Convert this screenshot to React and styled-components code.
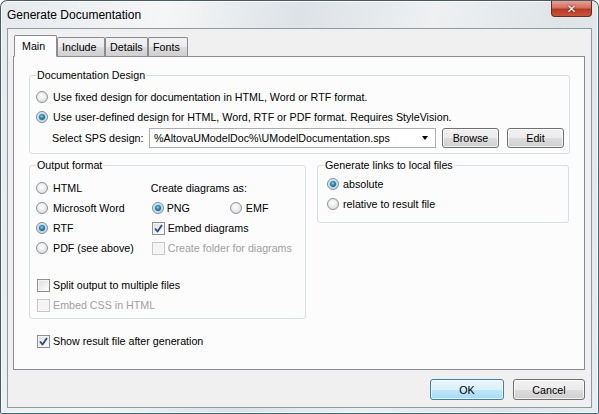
import React from 'react';
import styled, { createGlobalStyle, css } from 'styled-components';

const GlobalStyle = createGlobalStyle`
  html, body {
    margin: 0;
    padding: 0;
    background: #ffffff;
  }
  body {
    font-family: "Liberation Sans", Arial, sans-serif;
    font-size: 10.7px;
    color: #000;
  }
`;

// Window frame
const Window = styled.div`
  width: 599px;
  height: 414px;
  box-sizing: border-box;
  border: 1px solid #4a5a66;
  border-bottom-color: #2d6f82;
  border-right-color: #3c6f80;
  border-radius: 7px 7px 2px 2px;
  background: linear-gradient(100deg, #e6eaed 0%, #f5f6f7 25%, #dde2e6 45%, #eef0f2 65%, #dfe4e7 85%, #e9ecee 100%);
  box-shadow: inset 0 0 0 1px rgba(255, 255, 255, 0.7);
  display: flex;
  flex-direction: column;
  overflow: hidden;
`;

const TitleBar = styled.div`
  height: 27px;
  display: flex;
  justify-content: space-between;
  align-items: flex-start;
  padding: 0 6px 0 6px;
  flex-shrink: 0;
`;

const Title = styled.div`
  font-size: 12px;
  line-height: 12px;
  margin-top: 8px;
  color: #000;
`;

const CloseButton = styled.div`
  width: 41px;
  height: 16px;
  box-sizing: border-box;
  border: 1px solid #6d2a22;
  border-top: none;
  border-radius: 0 0 4px 4px;
  background: linear-gradient(#e8a093 0%, #d4705f 45%, #b73b24 55%, #c9553c 100%);
  display: flex;
  align-items: center;
  justify-content: center;
  color: #fff;
  font-family: "DejaVu Sans", sans-serif;
  font-weight: bold;
  font-size: 12px;
  text-shadow: 0 0 2px #5a1a10, 0 0 1px #5a1a10;
`;

const Client = styled.div`
  flex: 1;
  margin: 0 6px 7px 6px;
  border: 1px solid #8c9aa6;
  background: #f0f0f0;
  display: flex;
  flex-direction: column;
  padding: 5px 6px 7px 5px;
`;

// Tabs
const TabStrip = styled.div`
  display: flex;
  align-items: flex-end;
  height: 22px;
  padding-left: 1px;
  position: relative;
  z-index: 1;
`;

const Tab = styled.div`
  box-sizing: border-box;
  height: ${p => (p.$active ? '22px' : '19px')};
  padding: ${p => (p.$active ? '3px 0 0 7px' : '2px 0 0 4px')};
  width: ${p => p.$w}px;
  border: 1px solid #898c95;
  border-bottom: ${p => (p.$active ? '1px solid #fcfcfc' : 'none')};
  border-radius: 2px 2px 0 0;
  margin-bottom: ${p => (p.$active ? '-1px' : '0')};
  background: ${p =>
    p.$active ? '#fcfcfc' : 'linear-gradient(#f2f2f2 0%, #ebebeb 50%, #dddddd 51%, #cfcfcf 100%)'};
  line-height: 14px;
`;

const Panel = styled.div`
  box-sizing: border-box;
  height: 314px;
  border: 1px solid #898c95;
  background: #fcfcfc;
  padding: 12px 14px 0 15px;
  display: flex;
  flex-direction: column;
`;

// Group boxes
const Group = styled.fieldset`
  margin: 0;
  padding: 0 ${p => p.$pr ?? 6}px ${p => p.$pb || 0}px 6px;
  border: 1px solid #d5dfe5;
  border-radius: 3px;
  box-sizing: border-box;
  width: ${p => (p.$w ? `${p.$w}px` : 'auto')};
  min-width: 0;
`;

const Legend = styled.legend`
  padding: 0 1px;
  line-height: 13px;
`;

const GroupRow = styled.div`
  display: flex;
  gap: 11px;
  margin-top: 5px;
  align-items: flex-start;
`;

const Columns = styled.div`
  display: flex;
`;

const Column = styled.div`
  width: ${p => p.$w}px;
  display: flex;
  flex-direction: column;
`;

const Row = styled.div`
  display: flex;
  align-items: center;
  height: ${p => p.$h || 20}px;
  gap: ${p => p.$gap ?? 5}px;
  margin-top: ${p => p.$mt || 0}px;
  margin-left: ${p => p.$ml || 0}px;
  color: ${p => (p.$disabled ? '#a0a0a0' : '#000')};
  white-space: nowrap;
  & > * {
    flex-shrink: 0;
  }
`;

const Spacer = styled.div`
  width: ${p => p.$w}px;
`;

const FieldLabel = styled.span`
  width: ${p => p.$w}px;
`;

// Radio button
const RadioCircle = styled.span`
  width: 12px;
  height: 12px;
  box-sizing: border-box;
  border-radius: 50%;
  border: 1px solid #8b9297;
  background: radial-gradient(circle at 45% 40%, #ffffff 0%, #eeeff0 40%, #cfd2d5 100%);
  position: relative;
  flex-shrink: 0;
  ${p =>
    p.$checked &&
    css`
      border-color: #6f8fa8;
      &::after {
        content: '';
        position: absolute;
        left: 2px;
        top: 2px;
        width: 6px;
        height: 6px;
        border-radius: 50%;
        background: radial-gradient(circle at 45% 40%, #7fd5f2 0%, #2a7fa9 45%, #0e3d5c 100%);
        box-shadow: 0 0 1px 1px rgba(70, 150, 200, 0.35);
      }
    `}
`;

// Checkbox
const CheckBox = styled.span`
  width: 13px;
  height: 13px;
  box-sizing: border-box;
  border: 1px solid ${p => (p.$disabled ? '#c6c6c6' : '#8e8f8f')};
  background: ${p =>
    p.$disabled ? '#f4f4f4' : 'linear-gradient(135deg, #dcdcdc 0%, #f2f2f2 60%, #ffffff 100%)'};
  box-shadow: inset 0 0 0 1px ${p => (p.$disabled ? '#f7f7f7' : '#f4f4f4')};
  display: flex;
  align-items: center;
  justify-content: center;
  flex-shrink: 0;
`;

const CheckMark = () => (
  <svg width="9" height="9" viewBox="0 0 9 9">
    <path d="M1 4.5 L3.5 7.5 L8 1" fill="none" stroke="#2b4d8c" strokeWidth="1.9" strokeLinejoin="round" />
  </svg>
);

const Radio = ({ checked, children }) => (
  <Row>
    <RadioCircle $checked={checked} />
    <span>{children}</span>
  </Row>
);

const Check = ({ checked, disabled, children, ...rest }) => (
  <Row $gap={3} $disabled={disabled} {...rest}>
    <CheckBox $disabled={disabled}>{checked && <CheckMark />}</CheckBox>
    <span>{children}</span>
  </Row>
);

// Combo & buttons
const Combo = styled.div`
  box-sizing: border-box;
  width: 287px;
  height: 20px;
  border: 1px solid #abadb3;
  background: #fff;
  display: flex;
  align-items: center;
  justify-content: space-between;
  padding: 0 7px 0 4px;
`;

const Arrow = styled.span`
  width: 0;
  height: 0;
  border-left: 3.5px solid transparent;
  border-right: 3.5px solid transparent;
  border-top: 4px solid #000;
`;

const Button = styled.div`
  box-sizing: border-box;
  width: ${p => p.$w}px;
  height: ${p => p.$h || 20}px;
  border: 1px solid ${p => (p.$default ? '#3c7fb1' : '#707070')};
  border-radius: 3px;
  background: ${p =>
    p.$default
      ? 'linear-gradient(#eaf6fd 0%, #d9f0fc 50%, #bee6fd 51%, #a7d9f5 100%)'
      : 'linear-gradient(#f2f2f2 0%, #ebebeb 50%, #dddddd 51%, #cfcfcf 100%)'};
  box-shadow: inset 0 0 0 1px rgba(255, 255, 255, 0.7);
  display: flex;
  align-items: center;
  justify-content: center;
  margin-left: ${p => p.$ml || 0}px;
`;

const Footer = styled.div`
  display: flex;
  justify-content: flex-end;
  gap: 9px;
  margin-top: 9px;
`;

export default function App() {
  return (
    <>
      <GlobalStyle />
      <Window>
        <TitleBar>
          <Title>Generate Documentation</Title>
          <CloseButton>✕</CloseButton>
        </TitleBar>
        <Client>
          <TabStrip>
            <Tab $active $w={43}>Main</Tab>
            <Tab $w={48}>Include</Tab>
            <Tab $w={43}>Details</Tab>
            <Tab $w={40}>Fonts</Tab>
          </TabStrip>
          <Panel>
            <Group $pb={5} $pr={3}>
              <Legend>Documentation Design</Legend>
              <Row $h={5} />
              <Radio>Use fixed design for documentation in HTML, Word or RTF format.</Radio>
              <Radio checked>Use user-defined design for HTML, Word, RTF or PDF format. Requires StyleVision.</Radio>
              <Row $h={21} $gap={0}>
                <Spacer $w={16} />
                <FieldLabel $w={97}>Select SPS design:</FieldLabel>
                <Combo>
                  <span>%AltovaUModelDoc%\UModelDocumentation.sps</span>
                  <Arrow />
                </Combo>
                <Button $w={57} $ml={6}>Browse</Button>
                <Button $w={57} $ml={8}>Edit</Button>
              </Row>
            </Group>

            <GroupRow>
              <Group $w={277} $pb={3}>
                <Legend>Output format</Legend>
                <Row $h={6} />
                <Columns>
                  <Column $w={116}>
                    <Radio>HTML</Radio>
                    <Radio>Microsoft Word</Radio>
                    <Radio checked>RTF</Radio>
                    <Radio>PDF (see above)</Radio>
                  </Column>
                  <Column $w={150}>
                    <Row>Create diagrams as:</Row>
                    <Row $gap={0}>
                      <Spacer $w={1} />
                      <RadioCircle $checked />
                      <Spacer $w={3} />
                      <span>PNG</span>
                      <Spacer $w={40} />
                      <RadioCircle />
                      <Spacer $w={4} />
                      <span>EMF</span>
                    </Row>
                    <Check checked $ml={1}>Embed diagrams</Check>
                    <Check disabled $ml={1}>Create folder for diagrams</Check>
                  </Column>
                </Columns>
                <Check $mt={17} $ml={1}>Split output to multiple files</Check>
                <Check disabled $ml={1}>Embed CSS in HTML</Check>
              </Group>

              <Group $w={252} $pb={8}>
                <Legend>Generate links to local files</Legend>
                <Row $h={2} />
                <Row $gap={0}>
                  <Spacer $w={3} />
                  <RadioCircle $checked />
                  <Spacer $w={4} />
                  <span>absolute</span>
                </Row>
                <Row $gap={0}>
                  <Spacer $w={3} />
                  <RadioCircle />
                  <Spacer $w={4} />
                  <span>relative to result file</span>
                </Row>
              </Group>
            </GroupRow>

            <Check checked $mt={12} $ml={8}>Show result file after generation</Check>
          </Panel>
          <Footer>
            <Button $default $w={74} $h={21}>OK</Button>
            <Button $w={72} $h={21}>Cancel</Button>
          </Footer>
        </Client>
      </Window>
    </>
  );
}
